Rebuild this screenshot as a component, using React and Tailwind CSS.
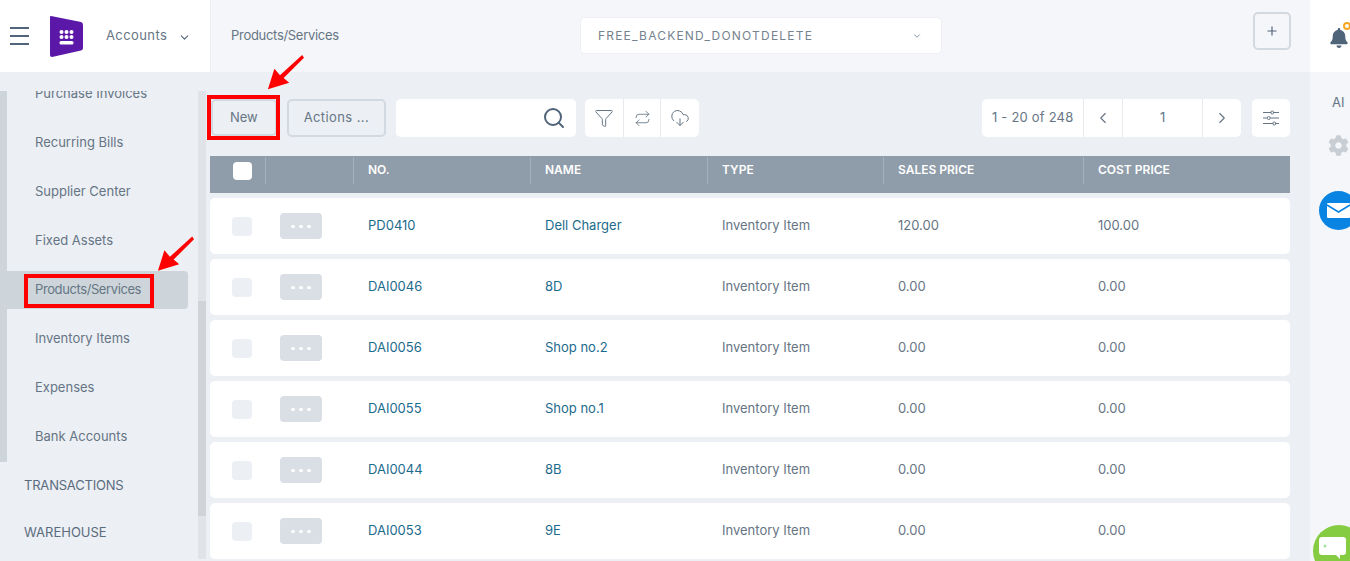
import React from "react";
import { Search, Filter, Repeat, CloudDownload, ChevronLeft, ChevronRight, ChevronDown, Plus } from "lucide-react";
import { FaBell, FaCog } from "react-icons/fa";

const font = { fontFamily: '"Inter","Open Sans",sans-serif' };
const side = ["Purchase Invoices", "Recurring Bills", "Supplier Center", "Fixed Assets", "Products/Services", "Inventory Items", "Expenses", "Bank Accounts"];
const rows = [
  ["PD0410", "Dell Charger", "120.00", "100.00"],
  ["DAI0046", "8D", "0.00", "0.00"],
  ["DAI0056", "Shop no.2", "0.00", "0.00"],
  ["DAI0055", "Shop no.1", "0.00", "0.00"],
  ["DAI0044", "8B", "0.00", "0.00"],
  ["DAI0053", "9E", "0.00", "0.00"],
];

function Arrow({ className }) {
  return (
    <svg className={className} viewBox="0 0 40 40" fill="#f00">
      <path d="M38 1 L14 23 L8 16 L1 38 L24 31 L18 26 L40 4 Z" />
    </svg>
  );
}

export default function App() {
  return (
    <div className="relative h-screen w-full overflow-hidden flex flex-col bg-[#eceff4] text-[13px] text-[#667584]" style={font}>
      <header className="h-[72px] flex shrink-0">
        <div className="w-[211px] bg-white border-r border-[#eceff4] flex items-center pl-[10px]">
          <div className="flex flex-col gap-[5.5px] w-[19px]">
            <span className="h-[2.5px] bg-[#51657a]" />
            <span className="h-[2.5px] bg-[#51657a]" />
            <span className="h-[2.5px] bg-[#51657a]" />
          </div>
          <svg className="ml-[21px]" width="33" height="41" viewBox="0 0 33 41">
            <path d="M1 0 L31 6 Q33 6.500 33 9 L33 32 Q33 34 31 34.500 L2 41 Q0 41 0 39 L0 1 Q0 0 1 0 Z" fill="#5a17a8" />
            <g fill="#fff">
              <circle cx="11.500" cy="16" r="2" /><circle cx="16.500" cy="16" r="2" /><circle cx="21.500" cy="16" r="2" />
              <circle cx="11.500" cy="21" r="2" /><circle cx="16.500" cy="21" r="2" /><circle cx="21.500" cy="21" r="2" />
              <rect x="9.500" y="25" width="14" height="3.500" rx="1.500" />
            </g>
          </svg>
          <span className="ml-[23px] tracking-[0.4px]">Accounts</span>
          <ChevronDown className="ml-[11px] mt-[2px] text-[#51657a]" size={13} strokeWidth={2} />
        </div>
        <div className="flex-1 bg-[#f4f6f9] relative flex items-center pl-[20px]">
          <span className="tracking-[-0.3px]">Products/Services</span>
          <div className="absolute left-[369px] top-[17px] w-[362px] h-[37px] bg-white border border-[#eef0f4] rounded-[5px] flex items-center pl-[17px] pr-[19px] justify-between text-[12px] tracking-[1.2px] text-[#75838f]">
            <span>FREE_BACKEND_DONOTDELETE</span>
            <ChevronDown size={10} strokeWidth={2} />
          </div>
          <div className="absolute left-[1042px] top-[12px] w-[38px] h-[38px] rounded-[5px] border-2 border-[#d2d9e0] flex items-center justify-center">
            <Plus size={14} className="text-[#51657a]" />
          </div>
        </div>
        <div className="w-[40px] bg-white relative">
          <FaBell className="absolute left-[19px] top-[28px] text-[#4f6478]" size={20} />
          <span className="absolute left-[33px] top-[22px] w-[8px] h-[8px] rounded-full border-2 border-[#f5a623] bg-white" />
        </div>
      </header>

      <div className="flex-1 flex min-h-0">
        <aside className="w-[206px] shrink-0 flex pt-[19px]">
          <div className="w-[198px] shrink-0 flex flex-col">
            <div className="h-[371px] border-l-[7px] border-[#cdd5da] overflow-hidden">
              <ul className="-mt-[16px]">
                {side.map((s) => (
                  <li key={s} className={"h-[38px] mb-[11px] pl-[28px] flex items-center w-[181px] rounded-r-[4px] " + (s === "Products/Services" ? "bg-[#cdd5da] tracking-[-0.4px]" : "")}>{s}</li>
                ))}
              </ul>
            </div>
            <div className="pl-[24px] mt-[14px] text-[#5a6c7e] tracking-[-0.2px]">TRANSACTIONS</div>
            <div className="pl-[24px] mt-[27px] text-[#5a6c7e]">WAREHOUSE</div>
          </div>
          <div className="w-[8px] h-[468px] bg-[#e0e3e8] pt-[210px]">
            <div className="h-[215px] bg-[#d0d3d8]" />
          </div>
        </aside>

        <main className="flex-1 min-w-0 pl-[4px] pr-[20px] pt-[27px]">
          <div className="flex items-start h-[38px]">
            <button className="w-[66px] h-[37px] rounded-[5px] border-2 border-[#d2d9e0] ml-[1px]">New</button>
            <button className="w-[100px] h-[38px] rounded-[5px] border-2 border-[#d2d9e0] ml-[10px] tracking-[0.4px]">Actions ...</button>
            <div className="w-[181px] h-[38px] bg-white rounded-[5px] ml-[10px] flex items-center justify-end pr-[10px]">
              <Search size={24} strokeWidth={2} className="text-[#4f6478]" />
            </div>
            <div className="w-[114px] h-[38px] bg-white rounded-[5px] ml-[9px] flex items-center divide-x divide-[#e6e9ee]">
              <div className="w-[39px] h-full flex items-center justify-center"><Filter size={20} strokeWidth={1.2} /></div>
              <div className="w-[37px] h-full flex items-center justify-center"><Repeat size={17} strokeWidth={1.2} /></div>
              <div className="w-[38px] h-full flex items-center justify-center"><CloudDownload size={20} strokeWidth={1.2} /></div>
            </div>
            <div className="w-[259px] h-[38px] bg-white rounded-[5px] ml-[283px] flex items-center divide-x divide-[#e6e9ee]">
              <div className="w-[102px] h-full flex items-center justify-center tracking-[0.2px]">1 - 20 of 248</div>
              <div className="w-[39px] h-full flex items-center justify-center"><ChevronLeft size={18} strokeWidth={1.5} /></div>
              <div className="w-[80px] h-full flex items-center justify-center">1</div>
              <div className="w-[38px] h-full flex items-center justify-center"><ChevronRight size={18} strokeWidth={1.5} /></div>
            </div>
            <div className="w-[38px] h-[38px] bg-white rounded-[5px] ml-[11px] flex items-center justify-center">
              <svg width="18" height="16" viewBox="0 0 18 16" fill="#fff" stroke="#667584" strokeWidth="1">
                <path d="M1 2.500H17M1 8H17M1 13.500H17" />
                <rect x="9" y="1" width="2.500" height="3" rx="1" />
                <rect x="5.500" y="6.500" width="2.500" height="3" rx="1" />
                <rect x="11" y="12" width="2.500" height="3" rx="1" />
              </svg>
            </div>
          </div>

          <div className="mt-[19px] h-[37px] w-[1080px] bg-[#8f9ca9] text-white text-[12px] font-semibold flex items-start pt-[1px]">
            <div className="w-[56px] h-[27px] flex items-center pl-[23px] border-r border-[#a5b0ba]"><span className="w-[19px] h-[18px] rounded-[4px] bg-white" /></div>
            <div className="w-[88px] h-[27px] border-r border-[#a5b0ba]" />
            <div className="w-[177px] h-[27px] pl-[14px] pb-[2px] flex items-center border-r border-[#a5b0ba]">NO.</div>
            <div className="w-[177px] h-[27px] pl-[14px] pb-[2px] flex items-center border-r border-[#a5b0ba]">NAME</div>
            <div className="w-[176px] h-[27px] pl-[14px] pb-[2px] flex items-center border-r border-[#a5b0ba]">TYPE</div>
            <div className="w-[200px] h-[27px] pl-[14px] pb-[2px] flex items-center border-r border-[#a5b0ba]">SALES PRICE</div>
            <div className="pl-[14px] h-[27px] pb-[2px] flex items-center">COST PRICE</div>
          </div>

          <div className="mt-[5px] flex flex-col gap-[5px] w-[1080px]">
            {rows.map((r) => (
              <div key={r[0]} className="h-[56px] bg-white rounded-[5px] flex items-center shrink-0">
                <div className="w-[56px] pl-[22px]"><span className="block w-[20px] h-[19px] rounded-[4px] bg-[#eceff4]" /></div>
                <div className="w-[88px] pl-[14px]">
                  <span className="w-[42px] h-[26px] rounded-[4px] bg-[#dadee5] flex items-center justify-center gap-[4px]">
                    <i className="w-[4px] h-[3px] bg-white rounded-full" /><i className="w-[4px] h-[3px] bg-white rounded-full" /><i className="w-[4px] h-[3px] bg-white rounded-full" />
                  </span>
                </div>
                <div className="w-[177px] pl-[14px] text-[#1c6a8c]">{r[0]}</div>
                <div className="w-[177px] pl-[14px] text-[#1c6a8c]">{r[1]}</div>
                <div className="w-[176px] pl-[14px]">Inventory Item</div>
                <div className="w-[200px] pl-[14px]">{r[2]}</div>
                <div className="pl-[14px]">{r[3]}</div>
              </div>
            ))}
          </div>
        </main>

        <div className="w-[40px] shrink-0 bg-[#f4f6f9] relative overflow-hidden">
          <span className="absolute left-[22px] top-[21px] text-[13px]">AI</span>
          <FaCog className="absolute left-[18px] top-[63px] text-[#c9ced4]" size={21} />
          <div className="absolute left-[9px] top-[119px] w-[39px] h-[39px] rounded-full bg-[#0a84e3]">
            <svg className="absolute left-[8px] top-[12px]" width="23" height="15" viewBox="0 0 23 15">
              <rect width="23" height="15" rx="1" fill="#fff" />
              <path d="M0 2 L11.500 9 L23 2" fill="none" stroke="#0a84e3" strokeWidth="1.500" />
            </svg>
          </div>
          <div className="absolute left-[3px] top-[453px] w-[52px] h-[52px] rounded-full bg-[#85cc42]">
            <svg className="absolute left-[6px] top-[12px]" width="27" height="22" viewBox="0 0 27 22">
              <path d="M3 0 H24 Q27 0 27 3 V15 Q27 18 24 18 H21 V22 L17 18 H3 Q0 18 0 15 V3 Q0 0 3 0 Z" fill="#fff" />
              <circle cx="6" cy="9" r="1.500" fill="#a5e0a0" />
            </svg>
          </div>
        </div>
      </div>

      {/* annotations */}
      <div className="absolute left-[207px] top-[95px] w-[73px] h-[45px] border-[4px] border-[#f00]" />
      <div className="absolute left-[24px] top-[274px] w-[130px] h-[34px] border-[4px] border-[#f00]" />
      <Arrow className="absolute left-[267px] top-[53px] w-[37px] h-[39px]" />
      <Arrow className="absolute left-[157px] top-[235px] w-[37px] h-[38px]" />
    </div>
  );
}
